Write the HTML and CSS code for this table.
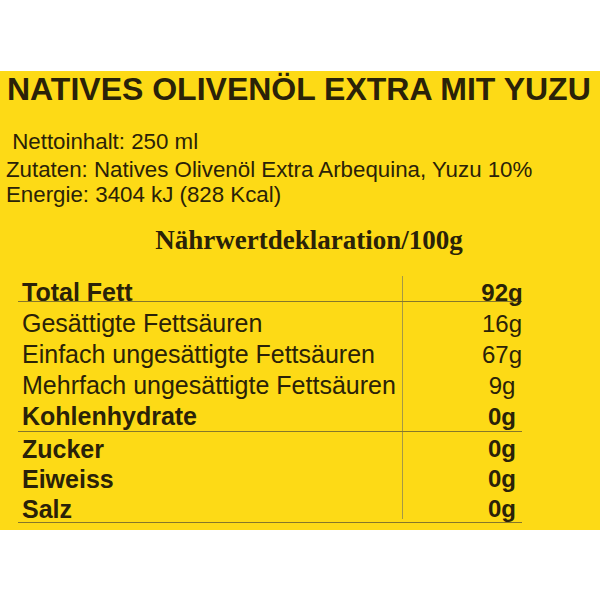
FILE: index.html
```html
<!DOCTYPE html>
<html lang="de">
<head>
<meta charset="utf-8">
<title>Natives Olivenöl Extra mit Yuzu</title>
<link rel="stylesheet" href="styles.css">
</head>
<body>
<div class="page">
  <section class="label">
    <h1 class="title">NATIVES OLIVENÖL EXTRA MIT YUZU</h1>
    <div class="info">
      <p class="line first">&nbsp;Nettoinhalt: 250 ml</p>
      <p class="line">Zutaten: Natives Olivenöl Extra Arbequina, Yuzu 10%</p>
      <p class="line">Energie: 3404 kJ (828 Kcal)</p>
    </div>
    <h2 class="heading">Nährwertdeklaration/100g</h2>
    <div class="table">
      <div class="group g1">
        <div class="row head bold"><span class="name">Total Fett</span><span class="val">92g</span></div>
      </div>
      <div class="group g2">
        <div class="row"><span class="name">Gesättigte Fettsäuren</span><span class="val">16g</span></div>
        <div class="row"><span class="name">Einfach ungesättigte Fettsäuren</span><span class="val">67g</span></div>
        <div class="row"><span class="name">Mehrfach ungesättigte Fettsäuren</span><span class="val">9g</span></div>
        <div class="row bold last"><span class="name">Kohlenhydrate</span><span class="val">0g</span></div>
      </div>
      <div class="group g3">
        <div class="row bold"><span class="name">Zucker</span><span class="val">0g</span></div>
        <div class="row bold"><span class="name">Eiweiss</span><span class="val">0g</span></div>
        <div class="row bold last"><span class="name">Salz</span><span class="val">0g</span></div>
      </div>
    </div>
  </section>
</div>
</body>
</html>
```
FILE: styles.css
```css
* { box-sizing: border-box; }
html, body { margin: 0; padding: 0; background: #ffffff; }
body { width: 600px; height: 600px; font-family: "Liberation Sans", Arial, sans-serif; color: #2a2208; }

.page { padding-top: 71px; }

.label {
  background: #fdda16;
  height: 459px;
  padding-top: 2px;
}

.title {
  margin: 0;
  padding-left: 7px;
  font-size: 32px;
  line-height: 32px;
  font-weight: bold;
  white-space: nowrap;
}

.info { margin-top: 24px; padding-left: 6px; }
.line {
  margin: 0;
  font-size: 22.3px;
  line-height: 25.5px;
  white-space: nowrap;
}
.line.first { margin-bottom: 2px; }

.heading {
  margin: 17px 0 0;
  padding-left: 18px;
  text-align: center;
  font-family: "Liberation Serif", "Times New Roman", serif;
  font-size: 27px;
  line-height: 31px;
  font-weight: bold;
  white-space: nowrap;
}

.table {
  margin: 20px 0 0 18px;
  width: 504px;
  border-bottom: 1px solid #86772a;
  background: linear-gradient(#a59846, #a59846) 384px 0 / 1px calc(100% - 3px) no-repeat;
}

.g1 { border-bottom: 1px solid #86772a; }
.g2 { padding-top: 6px; border-bottom: 1px solid #86772a; }
.g3 { padding-top: 2px; }

.row {
  display: grid;
  grid-template-columns: 1fr 40px;
  height: 31px;
  line-height: 31px;
  font-size: 25px;
  padding-left: 4px;
  white-space: nowrap;
}
.row.bold { font-weight: bold; }
.row.head { height: 25px; padding-top: 4px; line-height: 25px; }
.g2 .row.last { height: 30px; }
.g3 .row { height: 30px; line-height: 30px; }
.g3 .row.last { height: 28px; }

.val {
  display: flex;
  justify-content: center;
  font-size: 24px;
}
```
